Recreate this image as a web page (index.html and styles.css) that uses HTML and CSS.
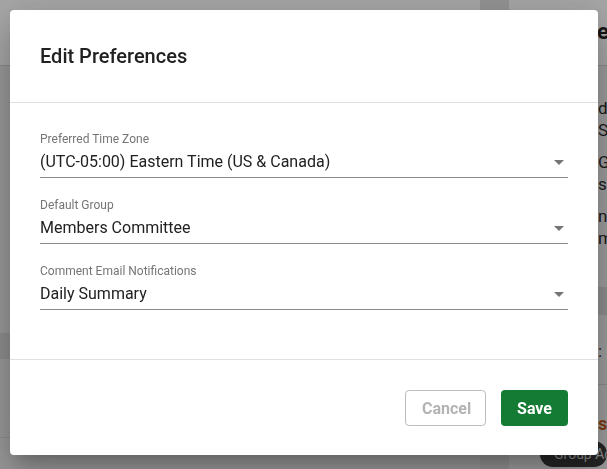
FILE: index.html
```html
<!DOCTYPE html>
<html>

<head>
  <title>Edit Preferences</title>
  <link rel="stylesheet" href="styles.css">
</head>

<body>

  <div class="page">
    <div class="page_head">
      <div class="head_main"></div>
      <div class="gutter"></div>
      <div class="head_side">ers</div>
    </div>
    <div class="page_body">
      <div class="main_col">
        <div class="main_blank"></div>
        <div class="main_band"></div>
        <div class="main_row"></div>
      </div>
      <div class="gutter"></div>
      <div class="side_col">
        <div class="side_item">
          <div class="side_line">d</div>
          <div class="side_line">Se</div>
        </div>
        <div class="side_item">
          <div class="side_line">Gr</div>
          <div class="side_line">s</div>
        </div>
        <div class="side_item">
          <div class="side_line">nt</div>
          <div class="side_line">m</div>
        </div>
        <div class="side_band"></div>
        <div class="side_row">:</div>
        <div class="side_link">st</div>
        <div class="side_pill">Group Admin</div>
      </div>
    </div>
  </div>

  <div class="overlay"></div>

  <div class="dialog">
    <div class="dialog_head">Edit Preferences</div>

    <div class="dialog_body">
      <div class="field">
        <div class="field_label">Preferred Time Zone</div>
        <div class="field_select">
          <span>(UTC-05:00) Eastern Time (US &amp; Canada)</span>
          <svg class="arrow" width="10" height="5" viewBox="0 0 10 5"><path d="M0 0 L10 0 L5 5 Z" /></svg>
        </div>
      </div>
      <div class="field">
        <div class="field_label">Default Group</div>
        <div class="field_select">
          <span>Members Committee</span>
          <svg class="arrow" width="10" height="5" viewBox="0 0 10 5"><path d="M0 0 L10 0 L5 5 Z" /></svg>
        </div>
      </div>
      <div class="field">
        <div class="field_label">Comment Email Notifications</div>
        <div class="field_select">
          <span>Daily Summary</span>
          <svg class="arrow" width="10" height="5" viewBox="0 0 10 5"><path d="M0 0 L10 0 L5 5 Z" /></svg>
        </div>
      </div>
    </div>

    <div class="dialog_foot">
      <button class="btn btn_cancel" disabled>Cancel</button>
      <button class="btn btn_save">Save</button>
    </div>
  </div>

</body>

</html>
```

FILE: styles.css
```css
body {
  margin: 0;
  font-family: Roboto, "Liberation Sans", sans-serif;
  background: #ececec;
  overflow: hidden;
}

.page {
  width: 607px;
  height: 469px;
  overflow: hidden;
}

.page_head {
  display: grid;
  grid-template-columns: 480px 29px 1fr;
  height: 65px;
  background: #ffffff;
  border-bottom: 1px solid #d4d4d4;
}

.head_side {
  padding: 19px 0 0 88px;
  font-size: 22px;
  font-weight: 700;
  line-height: 26px;
  color: #202020;
  white-space: nowrap;
  overflow: hidden;
}

.page_body {
  display: grid;
  grid-template-columns: 480px 29px 1fr;
  height: 403px;
}

.gutter {
  background: #e2e2e2;
}

.main_col {
  background: #ececec;
}

.main_blank {
  height: 267px;
}

.main_band {
  height: 26px;
  background: #dadada;
}

.main_row {
  height: 78px;
  border-bottom: 1px solid #d6d6d6;
}

.side_col {
  background: #f2f2f2;
  padding-top: 31px;
  white-space: nowrap;
  overflow: hidden;
  color: #2a2a2a;
  font-size: 17px;
}

.side_item {
  padding-left: 89px;
  margin-bottom: 10px;
}

.side_line {
  line-height: 22px;
}

.side_band {
  height: 28px;
  margin-top: 38px;
  background: #dcdcdc;
}

.side_row {
  padding: 26px 0 0 89px;
  height: 43px;
  border-bottom: 1px solid #d6d6d6;
}

.side_link {
  padding: 28px 0 0 89px;
  font-size: 18px;
  font-weight: 700;
  color: #c45a1a;
  height: 22px;
}

.side_pill {
  margin: 6px 0 0 31px;
  padding: 5px 14px;
  background: #3a3a3a;
  color: #d8d8d8;
  font-size: 14px;
  border-radius: 16px;
}

.overlay {
  position: fixed;
  top: 0;
  left: 0;
  right: 0;
  bottom: 0;
  background: rgba(0, 0, 0, 0.35);
}

.dialog {
  position: fixed;
  top: 10px;
  left: 10px;
  width: 588px;
  background: #ffffff;
  border-radius: 4px;
  box-shadow: 0 11px 15px -7px rgba(0, 0, 0, 0.2), 0 24px 38px 3px rgba(0, 0, 0, 0.14), 0 9px 46px 8px rgba(0, 0, 0, 0.12);
}

.dialog_head {
  padding: 32px 30px 32px 30px;
  font-size: 20px;
  font-weight: 500;
  line-height: 28px;
  color: #212121;
  border-bottom: 1px solid #e0e0e0;
}

.dialog_body {
  padding: 29px 30px 49px 30px;
}

.field {
  margin-bottom: 20px;
}

.field:last-child {
  margin-bottom: 0;
}

.field_label {
  font-size: 12px;
  line-height: 14px;
  color: #757575;
}

.field_select {
  display: flex;
  align-items: center;
  justify-content: space-between;
  padding: 4px 0 3px 0;
  line-height: 24px;
  font-size: 16px;
  color: #212121;
  border-bottom: 1px solid #8a8a8a;
}

.arrow {
  fill: #757575;
  margin-right: 4px;
}

.dialog_foot {
  display: flex;
  justify-content: flex-end;
  gap: 15px;
  padding: 30px 30px 29px 30px;
  border-top: 1px solid #e0e0e0;
}

.btn {
  height: 36px;
  padding: 0 16px;
  font-family: Roboto, "Liberation Sans", sans-serif;
  font-size: 16px;
  font-weight: 700;
  border-radius: 4px;
}

.btn_cancel {
  width: 81px;
  background: #ffffff;
  color: #b3b3b3;
  border: 1px solid #bdbdbd;
}

.btn_save {
  width: 67px;
  background: #137b33;
  color: #ffffff;
  border: none;
}
```
